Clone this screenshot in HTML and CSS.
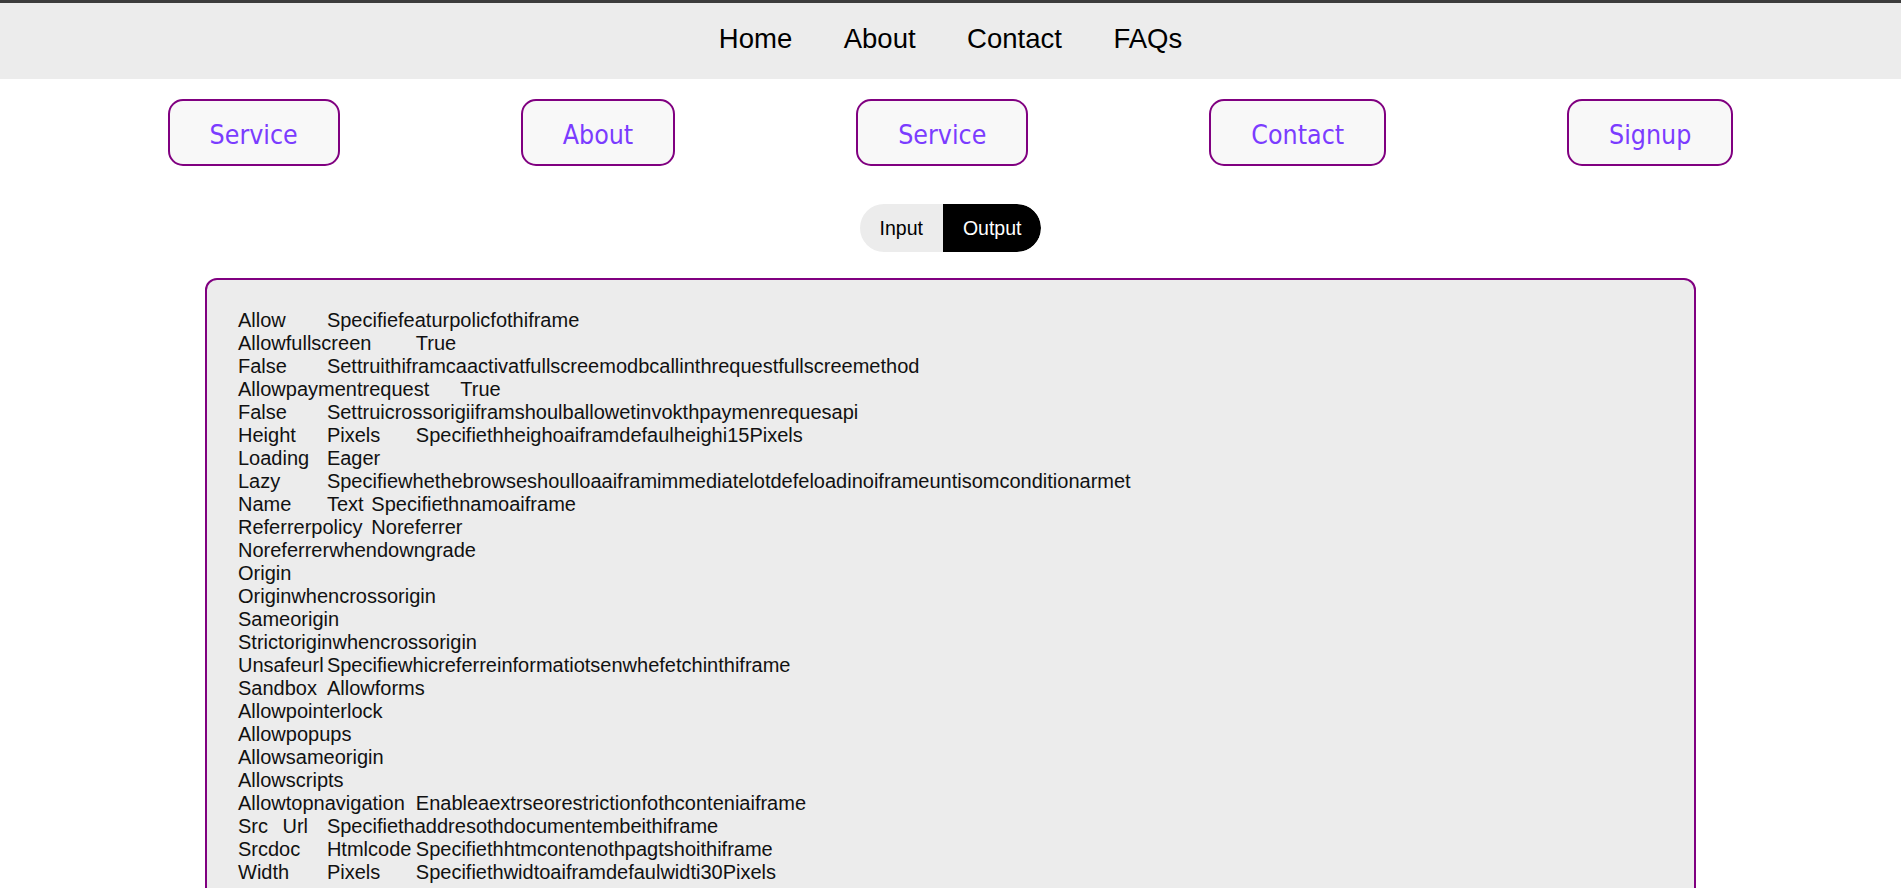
FILE: index.html
```html
<!DOCTYPE html>
<html lang="en">
<head>
<meta charset="utf-8">
<title>Iframe attributes</title>
<link rel="stylesheet" href="styles.css">
</head>
<body>
<header class="topbar">
  <nav class="topnav">
    <a class="topnav-link" href="#">Home</a>
    <a class="topnav-link" href="#">About</a>
    <a class="topnav-link" href="#">Contact</a>
    <a class="topnav-link" href="#">FAQs</a>
  </nav>
</header>
<div class="btn-row">
  <button class="pill-btn">Service</button>
  <button class="pill-btn">About</button>
  <button class="pill-btn">Service</button>
  <button class="pill-btn">Contact</button>
  <button class="pill-btn">Signup</button>
</div>
<div class="toggle-wrap">
  <div class="toggle">
    <span class="toggle-opt">Input</span>
    <span class="toggle-opt toggle-opt-active">Output</span>
  </div>
</div>
<section class="panel">
<pre class="output">Allow	Specifiefeaturpolicfothiframe
Allowfullscreen	True
False	Settruithiframcaactivatfullscreemodbcallinthrequestfullscreemethod
Allowpaymentrequest	True
False	Settruicrossorigiiframshoulballowetinvokthpaymenrequesapi
Height	Pixels	Specifiethheighoaiframdefaulheighi15Pixels
Loading	Eager
Lazy	Specifiewhethebrowseshoulloaaiframimmediatelotdefeloadinoiframeuntisomconditionarmet
Name	Text	Specifiethnamoaiframe
Referrerpolicy	Noreferrer
Noreferrerwhendowngrade
Origin
Originwhencrossorigin
Sameorigin
Strictoriginwhencrossorigin
Unsafeurl	Specifiewhicreferreinformatiotsenwhefetchinthiframe
Sandbox	Allowforms
Allowpointerlock
Allowpopups
Allowsameorigin
Allowscripts
Allowtopnavigation	Enableaextrseorestrictionfothconteniaiframe
Src	Url	Specifiethaddresothdocumentembeithiframe
Srcdoc	Htmlcode	Specifiethhtmcontenothpagtshoithiframe
Width	Pixels	Specifiethwidtoaiframdefaulwidti30Pixels</pre>
</section>
</body>
</html>
```

FILE: styles.css
```css
html, body {
  margin: 0;
  padding: 0;
  background: #ffffff;
}

body {
  font-family: "Liberation Sans", Arial, sans-serif;
  color: #000;
}

.topbar {
  border-top: 3px solid #3c3c3c;
  background: #ececec;
  padding: 20px 0 24px;
}

.topnav {
  display: flex;
  justify-content: center;
  gap: 51.5px;
}

.topnav-link {
  font-size: 27.5px;
  color: #000;
  text-decoration: none;
  line-height: 32px;
}

.btn-row {
  display: flex;
  justify-content: center;
  gap: 181px;
  margin-top: 20px;
}

.pill-btn {
  font-family: "DejaVu Sans Condensed", "DejaVu Sans", sans-serif;
  font-stretch: condensed;
  font-size: 26.5px;
  line-height: 31px;
  color: #7b3cff;
  background: #f8f8f8;
  border: 2px solid #800080;
  border-radius: 15px;
  padding: 18px 40px 14px;
  cursor: pointer;
}

.toggle-wrap {
  display: flex;
  justify-content: center;
  margin-top: 38px;
}

.toggle {
  display: flex;
  height: 48px;
  border-radius: 24px;
  overflow: hidden;
  background: #ececec;
}

.toggle-opt {
  display: flex;
  align-items: center;
  padding: 0 20px;
  font-size: 19.5px;
  color: #000;
}

.toggle-opt-active {
  background: #000;
  color: #fff;
  border-radius: 0 24px 24px 0;
}

.panel {
  box-sizing: border-box;
  width: 1491px;
  margin: 26px auto 40px;
  background: #ececec;
  border: 2px solid #800080;
  border-radius: 12px;
  padding: 29px 31px 30px;
}

.output {
  margin: 0;
  font-family: "Liberation Sans", Arial, sans-serif;
  font-size: 20px;
  line-height: 23px;
  color: #111;
  white-space: pre;
  tab-size: 8;
}
```
